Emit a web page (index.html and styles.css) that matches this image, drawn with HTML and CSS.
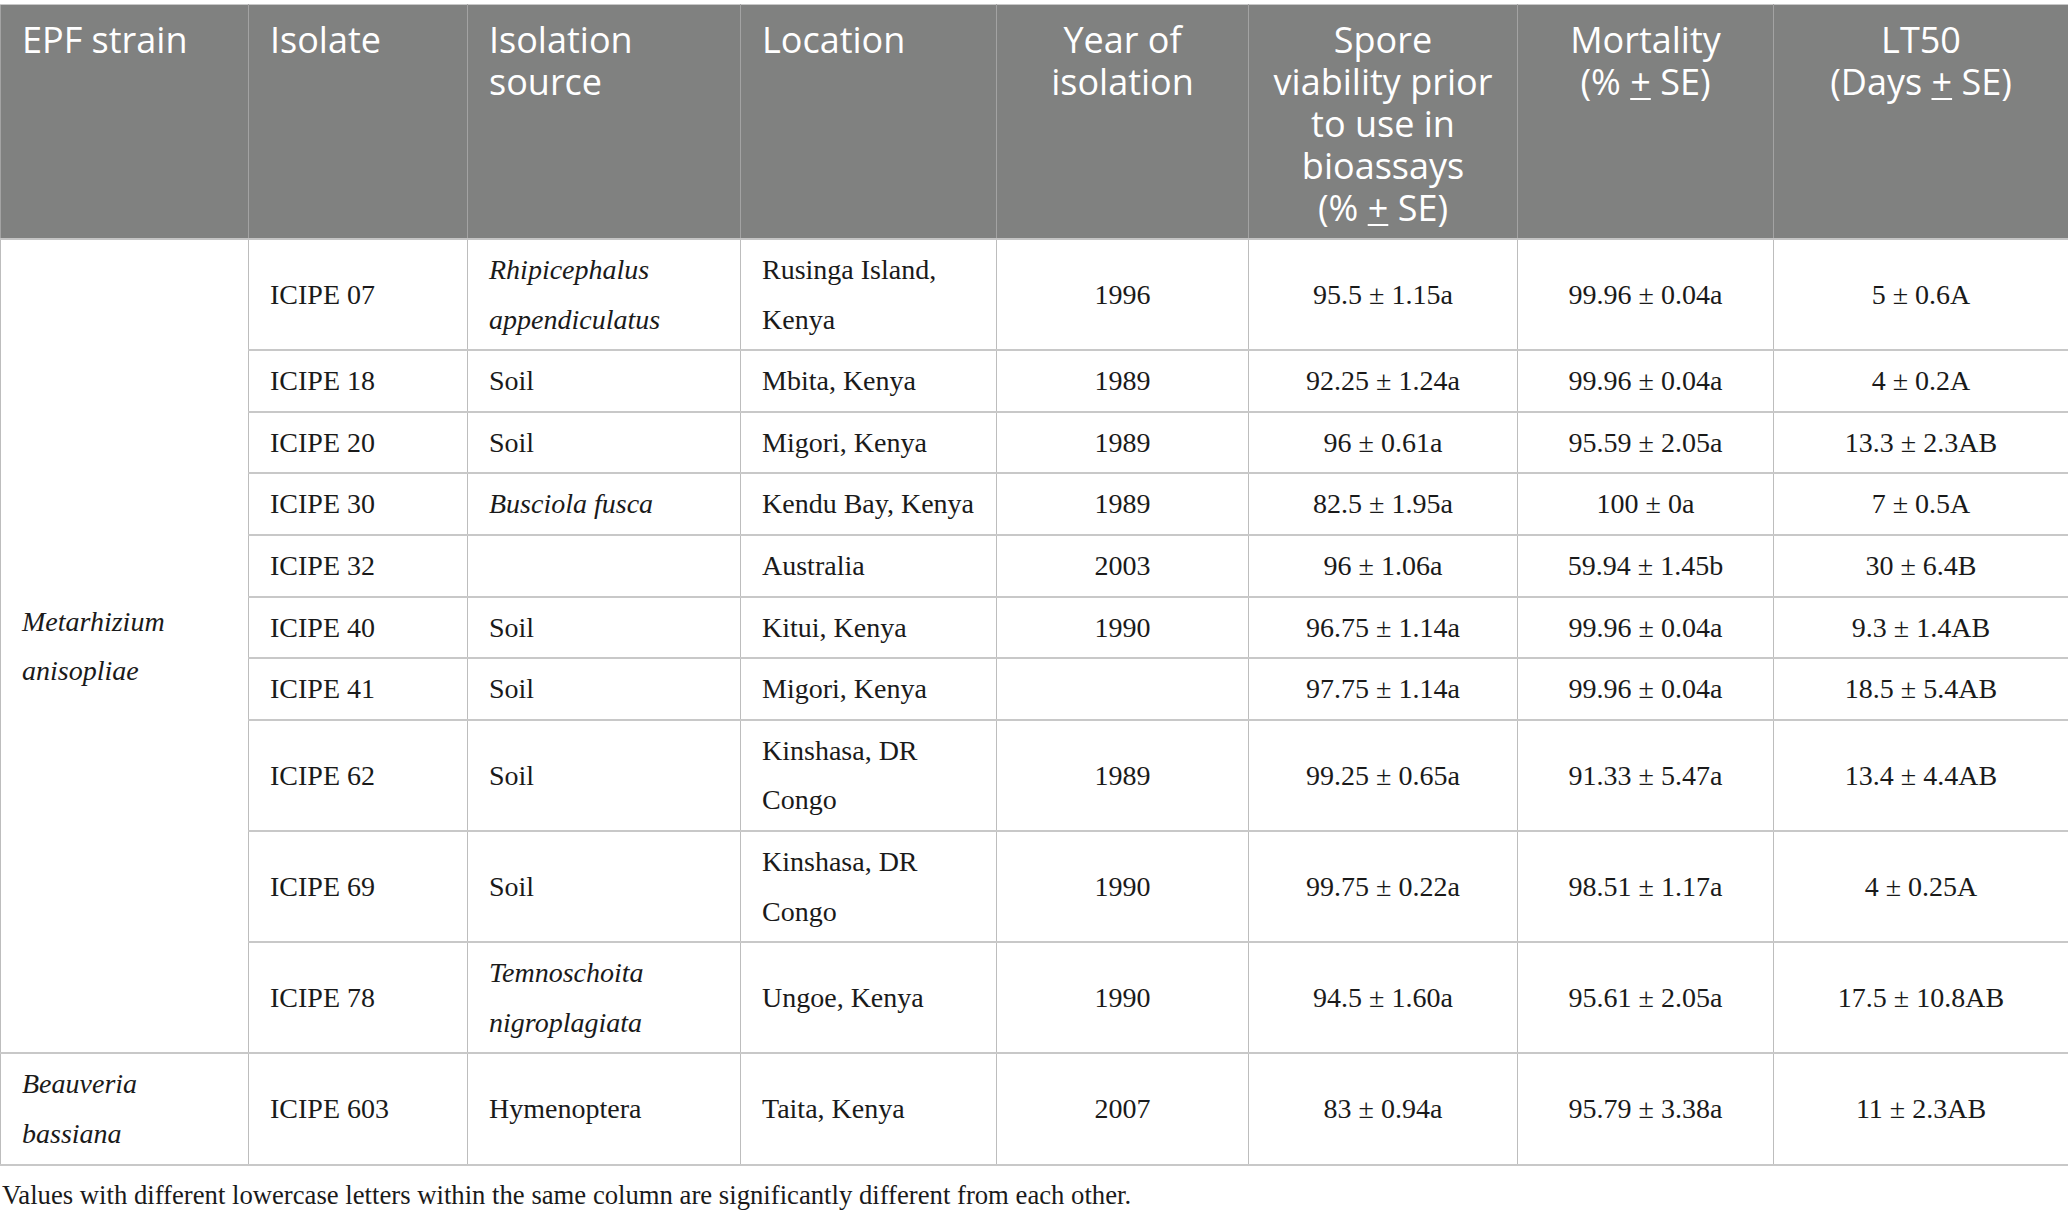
FILE: index.html
```html
<!DOCTYPE html>
<html lang="en">
<head>
    <meta charset="UTF-8">
    <meta name="viewport" content="width=device-width, initial-scale=1.0">
    <title>EPF strains - bioassay results</title>
    <link rel="stylesheet" href="styles.css">
</head>
<body>
    <table class="data-table">
        <colgroup>
            <col class="col-strain">
            <col class="col-isolate">
            <col class="col-source">
            <col class="col-location">
            <col class="col-year">
            <col class="col-spore">
            <col class="col-mortality">
            <col class="col-lt50">
        </colgroup>
        <thead>
            <tr>
                <th>EPF strain</th>
                <th>Isolate</th>
                <th>Isolation<br>source</th>
                <th>Location</th>
                <th class="center">Year of<br>isolation</th>
                <th class="center">Spore<br>viability prior<br>to use in<br>bioassays<br>(% <u>+</u> SE)</th>
                <th class="center">Mortality<br>(% <u>+</u> SE)</th>
                <th class="center">LT50<br>(Days <u>+</u> SE)</th>
            </tr>
        </thead>
        <tbody>
            <tr>
                <td rowspan="10" class="species">Metarhizium anisopliae</td>
                <td>ICIPE 07</td>
                <td><em>Rhipicephalus appendiculatus</em></td>
                <td>Rusinga Island, Kenya</td>
                <td class="center">1996</td>
                <td class="center">95.5 ± 1.15a</td>
                <td class="center">99.96 ± 0.04a</td>
                <td class="center">5 ± 0.6A</td>
            </tr>
            <tr>
                <td>ICIPE 18</td>
                <td>Soil</td>
                <td>Mbita, Kenya</td>
                <td class="center">1989</td>
                <td class="center">92.25 ± 1.24a</td>
                <td class="center">99.96 ± 0.04a</td>
                <td class="center">4 ± 0.2A</td>
            </tr>
            <tr>
                <td>ICIPE 20</td>
                <td>Soil</td>
                <td>Migori, Kenya</td>
                <td class="center">1989</td>
                <td class="center">96 ± 0.61a</td>
                <td class="center">95.59 ± 2.05a</td>
                <td class="center">13.3 ± 2.3AB</td>
            </tr>
            <tr>
                <td>ICIPE 30</td>
                <td><em>Busciola fusca</em></td>
                <td>Kendu Bay, Kenya</td>
                <td class="center">1989</td>
                <td class="center">82.5 ± 1.95a</td>
                <td class="center">100 ± 0a</td>
                <td class="center">7 ± 0.5A</td>
            </tr>
            <tr>
                <td>ICIPE 32</td>
                <td></td>
                <td>Australia</td>
                <td class="center">2003</td>
                <td class="center">96 ± 1.06a</td>
                <td class="center">59.94 ± 1.45b</td>
                <td class="center">30 ± 6.4B</td>
            </tr>
            <tr>
                <td>ICIPE 40</td>
                <td>Soil</td>
                <td>Kitui, Kenya</td>
                <td class="center">1990</td>
                <td class="center">96.75 ± 1.14a</td>
                <td class="center">99.96 ± 0.04a</td>
                <td class="center">9.3 ± 1.4AB</td>
            </tr>
            <tr>
                <td>ICIPE 41</td>
                <td>Soil</td>
                <td>Migori, Kenya</td>
                <td class="center"></td>
                <td class="center">97.75 ± 1.14a</td>
                <td class="center">99.96 ± 0.04a</td>
                <td class="center">18.5 ± 5.4AB</td>
            </tr>
            <tr>
                <td>ICIPE 62</td>
                <td>Soil</td>
                <td>Kinshasa, DR Congo</td>
                <td class="center">1989</td>
                <td class="center">99.25 ± 0.65a</td>
                <td class="center">91.33 ± 5.47a</td>
                <td class="center">13.4 ± 4.4AB</td>
            </tr>
            <tr>
                <td>ICIPE 69</td>
                <td>Soil</td>
                <td>Kinshasa, DR Congo</td>
                <td class="center">1990</td>
                <td class="center">99.75 ± 0.22a</td>
                <td class="center">98.51 ± 1.17a</td>
                <td class="center">4 ± 0.25A</td>
            </tr>
            <tr>
                <td>ICIPE 78</td>
                <td><em>Temnoschoita nigroplagiata</em></td>
                <td>Ungoe, Kenya</td>
                <td class="center">1990</td>
                <td class="center">94.5 ± 1.60a</td>
                <td class="center">95.61 ± 2.05a</td>
                <td class="center">17.5 ± 10.8AB</td>
            </tr>
            <tr>
                <td class="species">Beauveria bassiana</td>
                <td>ICIPE 603</td>
                <td>Hymenoptera</td>
                <td>Taita, Kenya</td>
                <td class="center">2007</td>
                <td class="center">83 ± 0.94a</td>
                <td class="center">95.79 ± 3.38a</td>
                <td class="center">11 ± 2.3AB</td>
            </tr>
        </tbody>
    </table>
    <p class="footnote">Values with different lowercase letters within the same column are significantly different from each other.</p>
</body>
</html>
```

FILE: styles.css
```css
body {
    margin: 0;
    padding-top: 4px;
    background: white;
    font-family: "Liberation Serif", "Times New Roman", serif;
    color: #1a1a1a;
}
.data-table {
    width: 2068px;
    table-layout: fixed;
    border-collapse: collapse;
    border: 1px solid #bdbdbd;
}
.col-strain { width: 248px; }
.col-isolate { width: 219px; }
.col-source { width: 273px; }
.col-location { width: 256px; }
.col-year { width: 252px; }
.col-spore { width: 269px; }
.col-mortality { width: 256px; }
.col-lt50 { width: 295px; }
th {
    background: #808180;
    color: white;
    font-family: "Open Sans", sans-serif;
    font-weight: 400;
    font-size: 36px;
    line-height: 42px;
    text-align: left;
    vertical-align: top;
    white-space: nowrap;
    padding: 14px 18px 9px 21px;
    border-left: 1px solid #a3a3a3;
    border-right: 1px solid #a3a3a3;
    border-top: 1px solid #c8c8c8;
    border-bottom: 2px solid #c4c4c4;
}
th.center {
    padding-left: 4px;
    padding-right: 4px;
}
th u {
    text-decoration-thickness: 2px;
    text-underline-offset: 3px;
}
td {
    font-size: 28px;
    line-height: 49.6px;
    padding: 5px 18px 5px 21px;
    vertical-align: middle;
    border-left: 1px solid #bdbdbd;
    border-right: 1px solid #bdbdbd;
    border-top: 2px solid #c8c8c8;
    border-bottom: 2px solid #c8c8c8;
}
.center {
    text-align: center;
    padding-left: 10px;
    padding-right: 10px;
}
.species {
    font-style: italic;
}
.footnote {
    margin: 14px 0 0 2px;
    font-size: 26.7px;
    line-height: 30px;
}
```
